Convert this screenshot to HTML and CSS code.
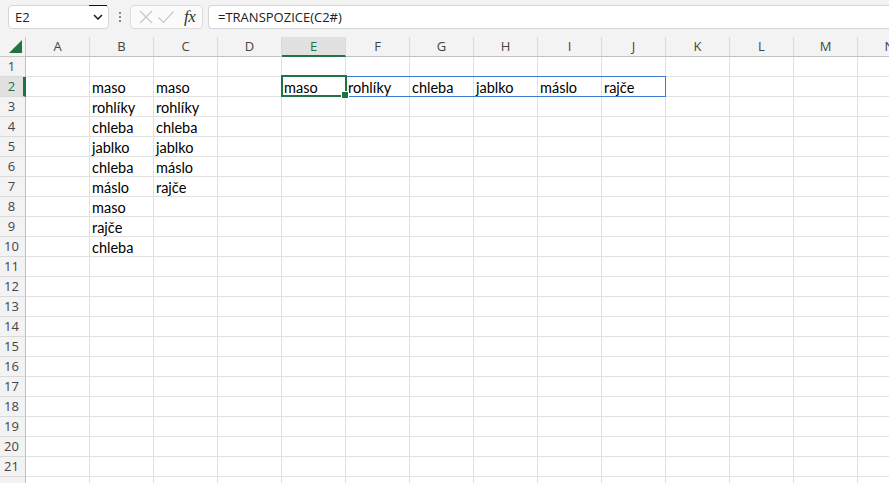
FILE: index.html
```html
<!DOCTYPE html>
<html lang="cs">
<head>
<meta charset="utf-8">
<title>Excel</title>
<link rel="stylesheet" href="styles.css">
</head>
<body>
<div class="app">
  <div class="toolbar">
    <div class="namebox">
      <span class="nb-text">E2</span>
      <span class="nb-drop">
        <svg width="10" height="6" viewBox="0 0 10 6"><path d="M1 1 L5 5 L9 1" fill="none" stroke="#222" stroke-width="1.6"/></svg>
      </span>
    </div>
    <div class="dots"><span></span><span></span><span></span></div>
    <div class="fbtns">
      <svg class="ic" width="16" height="16" viewBox="0 0 16 16"><path d="M2 2 L14 14 M14 2 L2 14" stroke="#c8c8c8" stroke-width="1.2" fill="none"/></svg>
      <svg class="ic" width="18" height="16" viewBox="0 0 18 16"><path d="M1.5 8.5 L6.5 13.5 L16.5 2.5" stroke="#c8c8c8" stroke-width="1.2" fill="none"/></svg>
      <span class="fx">fx</span>
    </div>
    <div class="formula">=TRANSPOZICE(C2#)</div>
  </div>
  <div class="sheet">
    <div class="grid">
      <div class="corner"><span class="tri"></span></div>
      <div class="ch">A</div><div class="ch">B</div><div class="ch">C</div><div class="ch">D</div><div class="ch sel">E</div><div class="ch">F</div><div class="ch">G</div><div class="ch">H</div><div class="ch">I</div><div class="ch">J</div><div class="ch">K</div><div class="ch">L</div><div class="ch">M</div><div class="ch">N</div>

      <div class="rh">1</div><div class="c"></div><div class="c"></div><div class="c"></div><div class="c"></div><div class="c"></div><div class="c"></div><div class="c"></div><div class="c"></div><div class="c"></div><div class="c"></div><div class="c"></div><div class="c"></div><div class="c"></div><div class="c"></div>
      <div class="rh sel">2</div><div class="c"></div><div class="c">maso</div><div class="c">maso</div><div class="c"></div><div class="c">maso</div><div class="c">rohlíky</div><div class="c">chleba</div><div class="c">jablko</div><div class="c">máslo</div><div class="c">rajče</div><div class="c"></div><div class="c"></div><div class="c"></div><div class="c"></div>
      <div class="rh">3</div><div class="c"></div><div class="c">rohlíky</div><div class="c">rohlíky</div><div class="c"></div><div class="c"></div><div class="c"></div><div class="c"></div><div class="c"></div><div class="c"></div><div class="c"></div><div class="c"></div><div class="c"></div><div class="c"></div><div class="c"></div>
      <div class="rh">4</div><div class="c"></div><div class="c">chleba</div><div class="c">chleba</div><div class="c"></div><div class="c"></div><div class="c"></div><div class="c"></div><div class="c"></div><div class="c"></div><div class="c"></div><div class="c"></div><div class="c"></div><div class="c"></div><div class="c"></div>
      <div class="rh">5</div><div class="c"></div><div class="c">jablko</div><div class="c">jablko</div><div class="c"></div><div class="c"></div><div class="c"></div><div class="c"></div><div class="c"></div><div class="c"></div><div class="c"></div><div class="c"></div><div class="c"></div><div class="c"></div><div class="c"></div>
      <div class="rh">6</div><div class="c"></div><div class="c">chleba</div><div class="c">máslo</div><div class="c"></div><div class="c"></div><div class="c"></div><div class="c"></div><div class="c"></div><div class="c"></div><div class="c"></div><div class="c"></div><div class="c"></div><div class="c"></div><div class="c"></div>
      <div class="rh">7</div><div class="c"></div><div class="c">máslo</div><div class="c">rajče</div><div class="c"></div><div class="c"></div><div class="c"></div><div class="c"></div><div class="c"></div><div class="c"></div><div class="c"></div><div class="c"></div><div class="c"></div><div class="c"></div><div class="c"></div>
      <div class="rh">8</div><div class="c"></div><div class="c">maso</div><div class="c"></div><div class="c"></div><div class="c"></div><div class="c"></div><div class="c"></div><div class="c"></div><div class="c"></div><div class="c"></div><div class="c"></div><div class="c"></div><div class="c"></div><div class="c"></div>
      <div class="rh">9</div><div class="c"></div><div class="c">rajče</div><div class="c"></div><div class="c"></div><div class="c"></div><div class="c"></div><div class="c"></div><div class="c"></div><div class="c"></div><div class="c"></div><div class="c"></div><div class="c"></div><div class="c"></div><div class="c"></div>
      <div class="rh">10</div><div class="c"></div><div class="c">chleba</div><div class="c"></div><div class="c"></div><div class="c"></div><div class="c"></div><div class="c"></div><div class="c"></div><div class="c"></div><div class="c"></div><div class="c"></div><div class="c"></div><div class="c"></div><div class="c"></div>
      <div class="rh">11</div><div class="c"></div><div class="c"></div><div class="c"></div><div class="c"></div><div class="c"></div><div class="c"></div><div class="c"></div><div class="c"></div><div class="c"></div><div class="c"></div><div class="c"></div><div class="c"></div><div class="c"></div><div class="c"></div>
      <div class="rh">12</div><div class="c"></div><div class="c"></div><div class="c"></div><div class="c"></div><div class="c"></div><div class="c"></div><div class="c"></div><div class="c"></div><div class="c"></div><div class="c"></div><div class="c"></div><div class="c"></div><div class="c"></div><div class="c"></div>
      <div class="rh">13</div><div class="c"></div><div class="c"></div><div class="c"></div><div class="c"></div><div class="c"></div><div class="c"></div><div class="c"></div><div class="c"></div><div class="c"></div><div class="c"></div><div class="c"></div><div class="c"></div><div class="c"></div><div class="c"></div>
      <div class="rh">14</div><div class="c"></div><div class="c"></div><div class="c"></div><div class="c"></div><div class="c"></div><div class="c"></div><div class="c"></div><div class="c"></div><div class="c"></div><div class="c"></div><div class="c"></div><div class="c"></div><div class="c"></div><div class="c"></div>
      <div class="rh">15</div><div class="c"></div><div class="c"></div><div class="c"></div><div class="c"></div><div class="c"></div><div class="c"></div><div class="c"></div><div class="c"></div><div class="c"></div><div class="c"></div><div class="c"></div><div class="c"></div><div class="c"></div><div class="c"></div>
      <div class="rh">16</div><div class="c"></div><div class="c"></div><div class="c"></div><div class="c"></div><div class="c"></div><div class="c"></div><div class="c"></div><div class="c"></div><div class="c"></div><div class="c"></div><div class="c"></div><div class="c"></div><div class="c"></div><div class="c"></div>
      <div class="rh">17</div><div class="c"></div><div class="c"></div><div class="c"></div><div class="c"></div><div class="c"></div><div class="c"></div><div class="c"></div><div class="c"></div><div class="c"></div><div class="c"></div><div class="c"></div><div class="c"></div><div class="c"></div><div class="c"></div>
      <div class="rh">18</div><div class="c"></div><div class="c"></div><div class="c"></div><div class="c"></div><div class="c"></div><div class="c"></div><div class="c"></div><div class="c"></div><div class="c"></div><div class="c"></div><div class="c"></div><div class="c"></div><div class="c"></div><div class="c"></div>
      <div class="rh">19</div><div class="c"></div><div class="c"></div><div class="c"></div><div class="c"></div><div class="c"></div><div class="c"></div><div class="c"></div><div class="c"></div><div class="c"></div><div class="c"></div><div class="c"></div><div class="c"></div><div class="c"></div><div class="c"></div>
      <div class="rh">20</div><div class="c"></div><div class="c"></div><div class="c"></div><div class="c"></div><div class="c"></div><div class="c"></div><div class="c"></div><div class="c"></div><div class="c"></div><div class="c"></div><div class="c"></div><div class="c"></div><div class="c"></div><div class="c"></div>
      <div class="rh">21</div><div class="c"></div><div class="c"></div><div class="c"></div><div class="c"></div><div class="c"></div><div class="c"></div><div class="c"></div><div class="c"></div><div class="c"></div><div class="c"></div><div class="c"></div><div class="c"></div><div class="c"></div><div class="c"></div>
      <div class="rh"></div><div class="c"></div><div class="c"></div><div class="c"></div><div class="c"></div><div class="c"></div><div class="c"></div><div class="c"></div><div class="c"></div><div class="c"></div><div class="c"></div><div class="c"></div><div class="c"></div><div class="c"></div><div class="c"></div>

      <div class="spill"></div>
      <div class="active"><span class="handle"></span></div>
    </div>
  </div>
</div>
</body>
</html>
```

FILE: styles.css
```css
html, body {
  margin: 0;
  padding: 0;
  background: #ffffff;
}
.app {
  width: 889px;
  height: 483px;
  overflow: hidden;
  font-family: "Liberation Sans", Arial, sans-serif;
  background: #f3f3f3;
}
.toolbar {
  height: 37px;
  box-sizing: border-box;
  padding: 5px 0 0 8px;
  display: flex;
  align-items: flex-start;
  background: #f3f3f3;
}
.namebox {
  width: 101px;
  height: 24px;
  box-sizing: border-box;
  background: #fff;
  border: 1px solid #d6d6d6;
  border-radius: 4px;
  display: flex;
  align-items: center;
  justify-content: space-between;
  position: relative;
}
.nb-text {
  padding-left: 6px;
  font-size: 13px;
  color: #222;
  font-family: "Open Sans", "Liberation Sans", sans-serif;
}
.nb-drop {
  width: 18px;
  height: 23px;
  display: flex;
  align-items: center;
  justify-content: center;
  margin-right: 1px;
  border-top: 1px solid #111;
  box-sizing: border-box;
  margin-top: -1px;
}
.dots {
  width: 21px;
  height: 24px;
  display: flex;
  flex-direction: column;
  align-items: center;
  justify-content: center;
  gap: 2px;
}
.dots span {
  width: 2px;
  height: 2px;
  background: #8a8a8a;
}
.fbtns {
  width: 73px;
  height: 24px;
  box-sizing: border-box;
  background: #fbfbfb;
  border: 1px solid #dcdcdc;
  border-radius: 4px;
  display: flex;
  align-items: center;
  padding-left: 7px;
  gap: 3px;
}
.fx {
  font-family: "Liberation Serif", "DejaVu Serif", serif;
  font-style: italic;
  font-size: 17px;
  color: #333;
  margin-left: 6px;
  letter-spacing: -0.5px;
}
.formula {
  margin-left: 5px;
  flex: 1;
  height: 24px;
  box-sizing: border-box;
  background: #fff;
  border: 1px solid #d6d6d6;
  border-right: none;
  border-radius: 4px 0 0 4px;
  padding-left: 9px;
  font-family: "Open Sans", "Liberation Sans", sans-serif;
  font-size: 13px;
  line-height: 22px;
  color: #222;
}
.sheet {
  background: #fff;
}
.grid {
  position: relative;
  display: grid;
  grid-template-columns: 26px repeat(14, 64px);
  grid-auto-rows: 20px;
  width: max-content;
}
.corner {
  background: #f3f3f3;
  border-right: 1px solid #c8c8c8;
  border-bottom: 1px solid #c8c8c8;
  box-sizing: border-box;
  position: relative;
}
.tri {
  position: absolute;
  right: 3px;
  bottom: 3px;
  width: 0;
  height: 0;
  border-left: 13px solid transparent;
  border-bottom: 13px solid #217346;
}
.ch {
  background: #f3f3f3;
  border-right: 1px solid #dadada;
  border-bottom: 1px solid #c0c0c0;
  box-sizing: border-box;
  text-align: center;
  font-family: "Open Sans", "Liberation Sans", sans-serif;
  font-size: 13px;
  line-height: 19px;
  color: #444;
}
.ch.sel {
  background: #e1e1e1;
  color: #217346;
  border-bottom: 2px solid #217346;
  line-height: 18px;
}
.rh {
  background: #f3f3f3;
  border-right: 1px solid #c0c0c0;
  border-bottom: 1px solid #dadada;
  box-sizing: border-box;
  text-align: center;
  font-family: "Open Sans", "Liberation Sans", sans-serif;
  font-size: 13px;
  line-height: 19px;
  color: #444;
  padding-right: 2px;
}
.rh.sel {
  background: #e1e1e1;
  color: #217346;
  border-right: 3px solid #217346;
  padding-right: 0;
}
.c {
  border-right: 1px solid #e1e1e1;
  border-bottom: 1px solid #e1e1e1;
  box-sizing: border-box;
  padding-left: 2px;
  font-family: "Lato", "Liberation Sans", sans-serif;
  font-size: 14.5px;
  line-height: 21px;
  color: #000;
  white-space: nowrap;
  overflow: visible;
}
.spill {
  position: absolute;
  left: 346px;
  top: 39px;
  width: 320px;
  height: 21px;
  box-sizing: border-box;
  border: 1px solid #3a7bd5;
}
.active {
  position: absolute;
  left: 281px;
  top: 38px;
  width: 66px;
  height: 22px;
  box-sizing: border-box;
  border: 2px solid #217346;
}
.handle {
  position: absolute;
  right: -4px;
  bottom: -4px;
  width: 6px;
  height: 6px;
  background: #217346;
  border: 1px solid #fff;
}
```
